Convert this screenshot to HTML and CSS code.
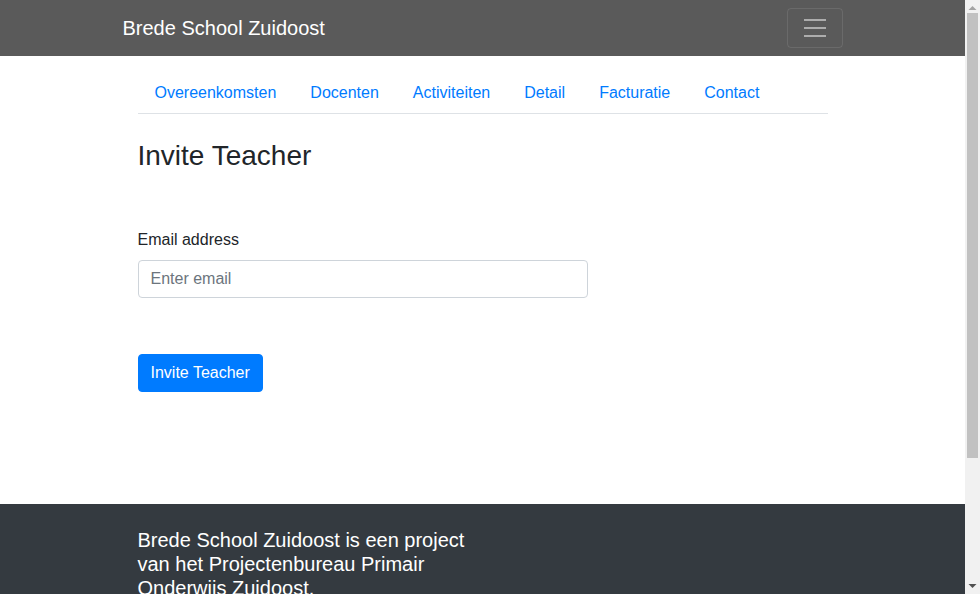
FILE: index.html
```html
<!DOCTYPE html>
<html lang="nl">
<head>
<meta charset="utf-8">
<title>Brede School Zuidoost</title>
<link rel="stylesheet" href="styles.css">
</head>
<body>
<div class="page">
  <nav class="navbar">
    <div class="navbar-inner">
      <a class="brand" href="#">Brede School Zuidoost</a>
      <button class="toggler" type="button" aria-label="Menu">
        <svg class="toggler-icon" viewBox="0 0 30 30" width="30" height="30">
          <path d="M4 7h22M4 15h22M4 23h22" stroke="rgba(255,255,255,0.5)" stroke-width="2" fill="none"/>
        </svg>
      </button>
    </div>
  </nav>

  <main class="container">
    <ul class="tabs">
      <li><a href="#">Overeenkomsten</a></li>
      <li><a href="#">Docenten</a></li>
      <li><a href="#">Activiteiten</a></li>
      <li><a href="#">Detail</a></li>
      <li><a href="#">Facturatie</a></li>
      <li><a href="#">Contact</a></li>
    </ul>

    <h1 class="title">Invite Teacher</h1>

    <form class="invite-form">
      <div class="form-group">
        <label class="label" for="email">Email address</label>
        <input class="input" id="email" type="email" placeholder="Enter email">
      </div>
      <button class="btn" type="button">Invite Teacher</button>
    </form>
  </main>

  <footer class="footer">
    <div class="container">
      <p class="footer-text">Brede School Zuidoost is een project van het Projectenbureau Primair Onderwijs Zuidoost.</p>
    </div>
  </footer>
</div>

<div class="scrollbar" aria-hidden="true">
  <svg class="sb-arrow" viewBox="0 0 15 15" width="15" height="15">
    <path d="M3.5 10h8l-4-4z" fill="#a3a3a3"/>
  </svg>
  <div class="sb-track"><div class="sb-thumb"></div></div>
  <svg class="sb-arrow" viewBox="0 0 15 15" width="15" height="15">
    <path d="M3.5 5h8l-4 4z" fill="#505050"/>
  </svg>
</div>
</body>
</html>
```

FILE: styles.css
```css
* { box-sizing: border-box; }

html, body {
  margin: 0;
  padding: 0;
}

body {
  font-family: "Liberation Sans", Arial, sans-serif;
  font-size: 16px;
  line-height: 1.5;
  color: #212529;
  background: #fff;
}

.page {
  margin-right: 15px;
}

.navbar {
  background: #5a5a5a;
  height: 56px;
  padding: 8px 0;
}

.navbar-inner {
  max-width: 720px;
  margin: 0 auto;
  display: flex;
  align-items: center;
  justify-content: space-between;
  height: 40px;
}

.brand {
  color: #fff;
  font-size: 20px;
  line-height: 30px;
  text-decoration: none;
}

.toggler {
  width: 56px;
  height: 40px;
  padding: 4px 12px;
  background: transparent;
  border: 1px solid rgba(255,255,255,0.1);
  border-radius: 4px;
  display: flex;
  align-items: center;
  justify-content: center;
}

.toggler-icon { display: block; }

.container {
  max-width: 720px;
  margin: 0 auto;
  padding: 0 15px;
}

main.container {
  padding-top: 16px;
  padding-bottom: 112px;
}

.tabs {
  list-style: none;
  margin: 0;
  padding: 0;
  display: flex;
  border-bottom: 1px solid #dee2e6;
}

.tabs li { margin-bottom: -1px; }

.tabs a {
  display: block;
  padding: 8px 16px;
  border: 1px solid transparent;
  color: #007bff;
  text-decoration: none;
}

.title {
  margin: 25px 0 0;
  font-size: 28px;
  font-weight: 500;
  line-height: 1.2;
}

.invite-form {
  margin-top: 55px;
}

.form-group {
  margin-bottom: 56px;
}

.label {
  display: block;
  margin-bottom: 8px;
}

.input {
  display: block;
  width: 450px;
  height: 38px;
  padding: 6px 12px;
  font: inherit;
  color: #495057;
  border: 1px solid #ced4da;
  border-radius: 4px;
  background: #fff;
}

.input::placeholder { color: #6c757d; opacity: 1; }

.btn {
  display: block;
  height: 38px;
  padding: 6px 12px;
  font: inherit;
  color: #fff;
  background: #007bff;
  border: 1px solid #007bff;
  border-radius: 4px;
}

.footer {
  background: #343a40;
  color: #fff;
  padding: 24px 0 150px;
}

.footer-text {
  margin: 0;
  width: 330px;
  font-size: 20px;
  line-height: 24px;
}

/* classic scrollbar drawn over the right edge, as in the reference */
.scrollbar {
  position: fixed;
  top: 0;
  right: 0;
  bottom: 0;
  width: 15px;
  background: #f1f1f1;
  display: flex;
  flex-direction: column;
}

.sb-arrow {
  display: block;
  flex: none;
}

.sb-track {
  flex: 1;
  padding: 0 2px;
}

.sb-thumb {
  height: 445px;
  margin-top: -2px;
  background: #c1c1c1;
}
```
